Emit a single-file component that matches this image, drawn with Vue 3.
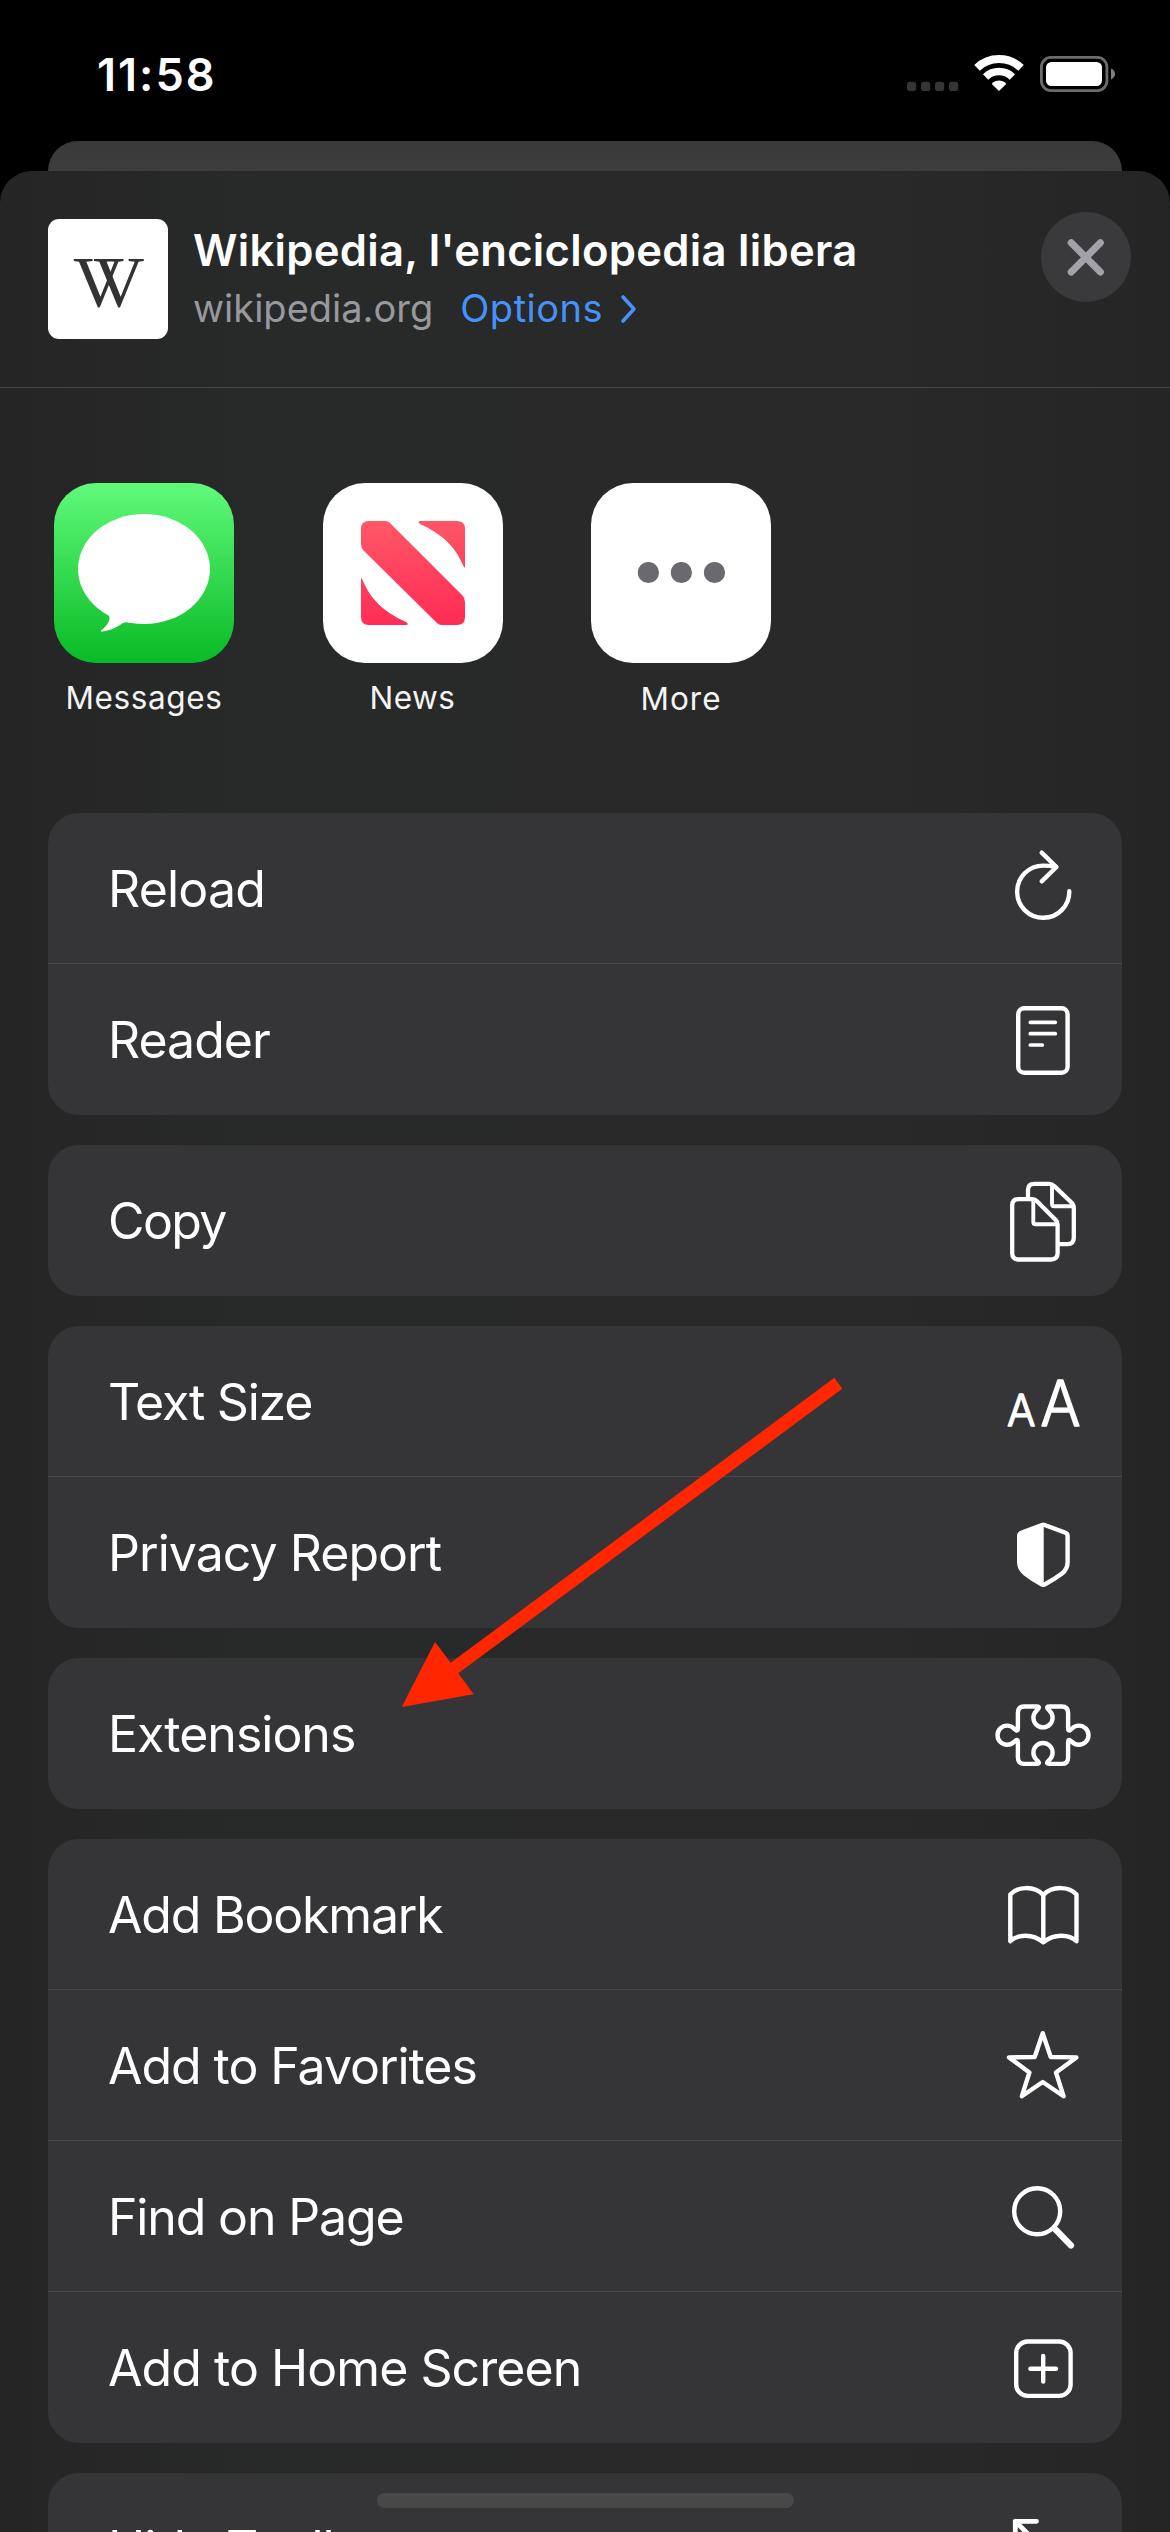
<script setup>
const groups = [
  [
    { label: 'Reload', icon: 'reload', track: -0.8 },
    { label: 'Reader', icon: 'reader', track: -1 }
  ],
  [{ label: 'Copy', icon: 'copy', track: -1.6 }],
  [
    { label: 'Text Size', icon: 'text', track: -1.25 },
    { label: 'Privacy Report', icon: 'privacy', track: -0.95 }
  ],
  [{ label: 'Extensions', icon: 'extensions', track: -1 }],
  [
    { label: 'Add Bookmark', icon: 'bookmark', track: -1.2 },
    { label: 'Add to Favorites', icon: 'favorites', track: -1.05 },
    { label: 'Find on Page', icon: 'find', track: -1.15 },
    { label: 'Add to Home Screen', icon: 'home', track: -0.95 }
  ],
  [{ label: 'Hide Toolbar', icon: 'hide', track: -1 }]
]
</script>

<template>
  <main class="screen">
    <header class="status">
      <span class="time">11:58</span>
      <svg class="status-icons" viewBox="0 0 270 70">
        <g fill="#353535">
          <rect x="27" y="41.7" width="9.2" height="9.3" rx="2.8" />
          <rect x="41" y="41.7" width="9.2" height="9.3" rx="2.8" />
          <rect x="55" y="41.7" width="9.2" height="9.3" rx="2.8" />
          <rect x="69" y="41.7" width="9.2" height="9.3" rx="2.8" />
        </g>
        <g fill="none" stroke="#fff">
          <path d="M97 27.8A32 32 0 0 1 141 27.8" stroke-width="8" />
          <path d="M105.6 36.9A19.5 19.5 0 0 1 132.4 36.9" stroke-width="7.6" />
        </g>
        <path d="M119 51L112.3 44.4Q111.8 43.3 112.8 42.6Q119 38.4 125.2 42.6Q126.2 43.3 125.7 44.4Z" fill="#fff" />
        <rect x="161.4" y="17.4" width="65.5" height="33.2" rx="9.5" fill="none" stroke="#6c6c6c" stroke-width="2.8" />
        <rect x="166" y="22" width="56" height="24" rx="5.5" fill="#fff" />
        <path d="M231 28.6Q235 30.5 235 34Q235 37.5 231 39.4Z" fill="#808080" />
      </svg>
    </header>

    <div class="back-card"></div>

    <section class="sheet">
      <div class="page-info">
        <div class="favicon">
          <svg viewBox="0 0 120 120">
            <text x="25" y="87" class="mark">VV</text>
          </svg>
        </div>
        <div class="details">
          <div class="title">Wikipedia, l'enciclopedia libera</div>
          <div class="meta">
            <span>wikipedia.org</span>
            <span class="options">Options</span>
            <svg class="chevron" viewBox="0 0 20 32">
              <path d="M4 4L15 16L4 28" fill="none" stroke="#4593f8" stroke-width="3.6" stroke-linecap="round" stroke-linejoin="round" />
            </svg>
          </div>
        </div>
        <div class="close">
          <svg viewBox="0 0 90 90">
            <path d="M30.2 30.8L59.4 60M59.4 30.8L30.2 60" stroke="#a2a2a9" stroke-width="7" stroke-linecap="round" />
          </svg>
        </div>
      </div>

      <div class="apps">
        <div class="app">
          <svg class="app-icon" viewBox="0 0 180 180">
            <defs>
              <linearGradient id="green" x1="0" y1="0" x2="0" y2="1">
                <stop offset="0" stop-color="#60fa7a" />
                <stop offset="1" stop-color="#09ba25" />
              </linearGradient>
            </defs>
            <rect width="180" height="180" fill="url(#green)" />
            <ellipse cx="90" cy="86" rx="66" ry="55" fill="#fff" />
            <path d="M50 127C55 131 57 134 54.5 139C52.5 143 49.5 145.5 47 147.6C46.5 148.600 47.3 148.8 48.5 148.6C57 147.5 63 144 69 140Q71.5 138.6 76 139.7L80 125Z" fill="#fff" />
          </svg>
          <span class="app-name app-name-wide">Messages</span>
        </div>
        <div class="app">
          <svg class="app-icon" viewBox="0 0 180 180">
            <defs>
              <linearGradient id="red" gradientUnits="userSpaceOnUse" x1="86" y1="38" x2="94" y2="142">
                <stop offset="0" stop-color="#ff5767" />
                <stop offset="1" stop-color="#ff2c55" />
              </linearGradient>
            </defs>
            <rect width="180" height="180" fill="#fff" />
            <g fill="url(#red)">
              <path d="M46 38H62Q65 38 67 40L139.5 112.5Q142 115 142 119V134Q142 142 134 142H118.5Q116 142 114 140L40.5 67.5Q38 65 38 61V46Q38 38 46 38Z" />
              <path d="M97 38H134Q142 38 142 46V83.5Q142 85.5 140.7 83.5C132 63 119 51 97 41Q94 38 97 38Z" />
              <path d="M38 96Q38 94.5 39.3 96.5C48 117 61 129 83 139Q86.5 142 83 142H46Q38 142 38 134Z" />
            </g>
          </svg>
          <span class="app-name">News</span>
        </div>
        <div class="app">
          <svg class="app-icon" viewBox="0 0 180 180">
            <rect width="180" height="180" fill="#fff" />
            <g fill="#69696f">
              <circle cx="57.4" cy="89.5" r="10.6" />
              <circle cx="90.4" cy="89.5" r="10.6" />
              <circle cx="123.5" cy="89.5" r="10.6" />
            </g>
          </svg>
          <span class="app-name app-name-more">More</span>
        </div>
      </div>

      <div class="groups">
        <div v-for="(group, i) in groups" :key="i" class="group">
          <div v-for="item in group" :key="item.label" class="row">
            <span class="label" :style="{ letterSpacing: item.track + 'px' }">{{ item.label }}</span>
            <svg class="icon" viewBox="0 0 120 151">
              <g v-if="item.icon === 'reload'">
                <path d="M86.3 78.2A26.1 26.1 0 1 1 60.2 52.6Q67 52.6 73 54" />
                <path d="M58.7 39.7L73.4 54L58.7 68.3" />
              </g>
              <g v-else-if="item.icon === 'reader'">
                <rect x="35.2" y="44.2" width="49.4" height="64.6" rx="6" />
                <path d="M47.3 58.3H72.3M47.3 69.7H72.3M47.3 81H59.3" stroke-width="3.7" />
              </g>
              <g v-else-if="item.icon === 'copy'" stroke-width="4.3">
                <path d="M35.5 54.2H49.5Q52 54.2 54 56.2L73 75.2Q74.6 76.8 74.6 79.5V108Q74.6 114.5 68 114.5H35.8Q29.2 114.5 29.2 108V60.5Q29.2 54.2 35.5 54.2Z" />
                <path d="M50.3 55V77Q50.3 79.3 52.6 79.3H74.3" stroke-width="3.9" />
                <path d="M45 54V45Q45 38.9 51.2 38.9H66.5Q69 38.9 71 40.9L89 58Q90.8 59.7 90.8 62.5V92.8Q90.8 99.2 84.5 99.2H75" />
                <path d="M69 40V59Q69 61.3 71.3 61.3H90.5" stroke-width="3.9" />
              </g>
              <g v-else-if="item.icon === 'text'" class="letters">
                <text transform="translate(23.9 99.9) scale(.96 1)" font-size="44">A</text>
                <text transform="translate(57.2 99.9) scale(.96 1)" font-size="62.5">A</text>
              </g>
              <g v-else-if="item.icon === 'privacy'">
                <path d="M59 48Q60.3 47.5 61.6 48L82.5 55.8Q84.6 56.7 84.6 59V85Q84.6 92.2 79 96.5Q71 102.5 61.6 107.5Q60.3 108.1 59 107.5Q49.5 102.5 42 96.5Q36.2 92 36.2 85V59Q36.2 56.7 38.3 55.8Z" />
                <path d="M60.7 48V107.5Q49.5 102.5 42 96.5Q36.2 92 36.2 85V58L59 48Z" fill="#fff" stroke="none" />
              </g>
              <path v-else-if="item.icon === 'extensions'" d="M34.9 55Q34.9 48.5 41.4 48.5H53.5Q56.8 48.5 55.4 50.6L53 53.2A9.6 9.6 0 1 0 67 53.2L64.6 50.6Q63.2 48.5 66.5 48.5H78.6Q85.1 48.5 85.1 55V70Q85.1 73.8 87.5 71.8L89 70.5A9.6 9.6 0 1 1 89 83.9L87.5 82.6Q85.1 80.6 85.1 84.4V99.4Q85.1 105.9 78.6 105.9H66.5Q63.2 105.9 64.6 103.8L67 101.2A9.6 9.6 0 1 0 53 101.2L55.4 103.8Q56.8 105.9 53.5 105.9H41.4Q34.9 105.9 34.9 99.4V84.4Q34.9 80.6 32.5 82.6L31 83.9A9.6 9.6 0 1 1 31 70.5L32.5 71.8Q34.9 73.8 34.9 70Z" />
              <path v-else-if="item.icon === 'bookmark'" d="M27.3 55.5C34.5 47.2 51.5 46.5 60.3 56C69.1 46.5 86.3 47.2 93.5 55.5V102.3C86 94.8 71 94.5 60.3 103.3C49.6 94.5 34.8 94.8 27.3 102.3ZM60.3 56V103" />
              <path v-else-if="item.icon === 'favorites'" d="M59.7 43.2L67.7 67L93.4 67.4L73 82.5L80.6 106.3L59.7 92L38.8 106.3L46.4 82.5L26 67.4L51.7 67Z" />
              <g v-else-if="item.icon === 'find'">
                <circle cx="54.2" cy="70.3" r="23" />
                <path d="M72.5 88.5L88 104.5" stroke-width="6.2" />
              </g>
              <g v-else-if="item.icon === 'home'">
                <rect x="33.2" y="49.5" width="54.4" height="54.4" rx="11.5" />
                <path d="M47.4 76.7H73M60.2 63.9V89.5" />
              </g>
              <path v-else d="M53.5 48.3H32.3V69.5M32.3 48.3L56 72" stroke-width="4.8" />
            </svg>
          </div>
        </div>
      </div>
    </section>

    <svg class="arrow" viewBox="0 0 442 331">
      <path d="M433.3 1.7L441.3 12.7L57.3 297.3L72.7 318.3L0.7 331L34 266L49.7 286.7Z" fill="#ff2600" />
    </svg>
    <div class="home-indicator"></div>
  </main>
</template>

<style>
body {
  margin: 0;
  background: #000;
}
</style>

<style scoped>
.screen {
  position: relative;
  width: 1170px;
  height: 2532px;
  overflow: hidden;
  background: #000;
  color: #fff;
  font-family: Inter, "Liberation Sans", sans-serif;
}

.screen * {
  box-sizing: border-box;
}

svg {
  display: block;
  flex: none;
}

.status {
  display: flex;
  justify-content: space-between;
  height: 141px;
  padding: 40px 20px 0 97px;
}

.time {
  font-size: 45px;
  font-weight: 600;
  line-height: 70px;
  letter-spacing: 2px;
}

.status-icons {
  width: 270px;
  height: 70px;
}

.back-card {
  height: 30px;
  margin: 0 48px;
  border-radius: 30px 30px 0 0;
  background: linear-gradient(#39393a, #3d3d3e);
}

.sheet {
  height: 2361px;
  overflow: hidden;
  border-radius: 32px 32px 0 0;
  background: linear-gradient(90deg, #252525, #282929 22%, #292929 75%, #252525);
}

.page-info {
  display: flex;
  height: 217px;
  padding: 0 39px 0 48px;
  border-bottom: 1px solid #424244;
}

.favicon {
  width: 120px;
  height: 120px;
  margin-top: 48px;
  border-radius: 11px;
  background: #fff;
}

.mark {
  fill: #333;
  font: 71px "Liberation Serif", serif;
  letter-spacing: -31px;
}

.details {
  flex: 1;
  margin: 50px 0 0 25px;
}

.title {
  font-size: 43.6px;
  font-weight: 600;
  line-height: 60px;
  letter-spacing: 0.28px;
  white-space: nowrap;
}

.meta {
  display: flex;
  align-items: center;
  color: #98989f;
  font-size: 38px;
  line-height: 54px;
}

.options {
  margin-left: 27px;
  color: #4593f8;
  letter-spacing: 0.5px;
}

.chevron {
  width: 20px;
  height: 32px;
  margin: 2px 0 0 16px;
}

.close {
  width: 90px;
  height: 90px;
  margin-top: 41px;
  border-radius: 50%;
  background: #3a3a3c;
}

.apps {
  display: flex;
  gap: 88.5px;
  height: 425px;
  padding: 95px 0 0 54px;
}

.app {
  display: flex;
  flex-direction: column;
  align-items: center;
  width: 180px;
}

.app-icon {
  width: 180px;
  height: 180px;
  border-radius: 42px;
}

.app-name {
  margin-top: 15px;
  color: #f4f4f4;
  font-size: 31.5px;
  line-height: 40px;
  letter-spacing: 0.5px;
}

.app-name-wide {
  letter-spacing: 0.6px;
}

.app-name-more {
  padding-top: 1px;
  letter-spacing: 1px;
}

.groups {
  display: flex;
  flex-direction: column;
  gap: 30px;
  padding: 0 48px;
}

.group {
  overflow: hidden;
  border-radius: 31px;
  background: #353537;
}

.row {
  display: flex;
  justify-content: space-between;
  height: 151px;
  padding: 0 19px 0 60px;
  border-bottom: 1px solid #48484a;
}

.row:last-child {
  border-bottom: 0;
}

.label {
  font-size: 50px;
  line-height: 153px;
  white-space: nowrap;
}

.icon {
  width: 120px;
  height: 151px;
  fill: none;
  stroke: #fff;
  stroke-width: 4.4px;
  stroke-linecap: round;
  stroke-linejoin: round;
}

.letters {
  fill: #fff;
  stroke-width: 1.4px;
  font-family: Inter, sans-serif;
  font-weight: 300;
}

.arrow {
  position: absolute;
  left: 401px;
  top: 1376px;
  width: 442px;
  height: 331px;
}

.home-indicator {
  position: absolute;
  left: 377px;
  top: 2493px;
  width: 417px;
  height: 15px;
  border-radius: 8px;
  background: #484848;
}
</style>
